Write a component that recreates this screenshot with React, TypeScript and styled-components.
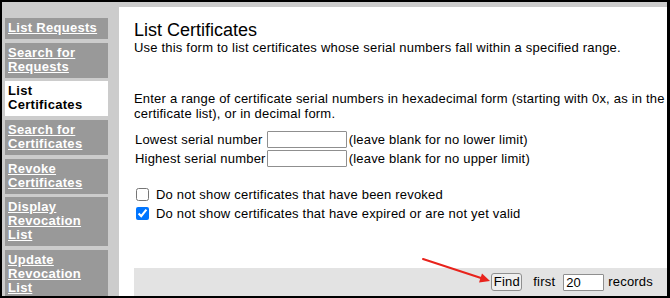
import React from "react";
import styled, { createGlobalStyle } from "styled-components";

const GlobalStyle = createGlobalStyle`
  html, body { margin: 0; padding: 0; background: #fff; }
  body { font-family: "Liberation Sans", Arial, sans-serif; }
`;

const Frame = styled.div`
  position: relative;
  box-sizing: border-box;
  width: 670px;
  height: 298px;
  border-style: solid;
  border-color: #000;
  border-width: 2px 3px 2px 2px;
  background: #cccccc;
  display: flex;
  overflow: hidden;
`;

const Sidebar = styled.nav`
  box-sizing: border-box;
  width: 117px;
  flex: none;
  padding: 16px 11px 0 3px;
  display: flex;
  flex-direction: column;
  gap: 3.7px;
`;

const NavItem = styled.a<{ $active?: boolean }>`
  display: block;
  padding: 3px 3px 4px 3px;
  background: ${(p) => (p.$active ? "#ffffff" : "#999999")};
  color: ${(p) => (p.$active ? "#000000" : "#ffffff")};
  text-decoration: ${(p) => (p.$active ? "none" : "underline")};
  font-size: 13px;
  line-height: 14px;
  font-weight: bold;
  letter-spacing: 0.3px;
  cursor: pointer;
`;

const Main = styled.main`
  flex: 1;
  margin-top: 5px;
  background: #ffffff;
  padding: 14px 0 0 15px;
  display: flex;
  flex-direction: column;
  color: #000;
  font-size: 13px;
  line-height: 15px;
  letter-spacing: 0.2px;
  min-width: 0;
`;

const Title = styled.h1`
  margin: 0;
  font-size: 18px;
  line-height: 19px;
  font-weight: normal;
  letter-spacing: 0;
`;

const Para = styled.p<{ $gap?: number }>`
  margin: ${(p) => p.$gap ?? 0}px 0 0 0;
  white-space: nowrap;
`;

const SerialGrid = styled.div`
  display: grid;
  grid-template-columns: max-content max-content 1fr;
  grid-auto-rows: 19px;
  align-items: center;
  margin-top: 9px;
`;

const Label = styled.span`
  padding: 0 1px 0 1px;
`;

const Note = styled.span`
  padding-left: 2px;
`;

const TextInput = styled.input<{ $w: number }>`
  box-sizing: border-box;
  width: ${(p) => p.$w}px;
  height: 17px;
  margin: 0;
  padding: 0 2px;
  border: 1px solid #8f8f8f;
  border-radius: 1px;
  font-family: "Liberation Sans", Arial, sans-serif;
  font-size: 13px;
  color: #000;
  background: #fff;
  outline: none;
`;

const Checks = styled.div`
  margin-top: 17px;
  display: flex;
  flex-direction: column;
`;

const CheckRow = styled.label`
  display: flex;
  align-items: center;
  height: 19px;
  input {
    margin: 0 7px 0 2px;
    width: 13px;
    height: 13px;
  }
`;

const Bar = styled.div`
  margin-top: 45px;
  height: 40px;
  background: #e3e3e3;
  display: flex;
  justify-content: flex-end;
  align-items: flex-start;
  padding: 5px 14px 0 0;
  box-sizing: border-box;
`;

const BarItem = styled.span<{ $ml?: number }>`
  margin-left: ${(p) => p.$ml ?? 0}px;
  line-height: 18px;
`;

const FindButton = styled.button`
  box-sizing: border-box;
  height: 18px;
  width: 31px;
  padding: 0;
  margin: 0;
  border: 1px solid #8f8f8f;
  border-radius: 3px;
  background: #efefef;
  font-family: "Liberation Sans", Arial, sans-serif;
  font-size: 13px;
  line-height: 16px;
  letter-spacing: 0.2px;
  color: #000;
`;

const InputWrap = styled.span<{ $ml?: number }>`
  margin-left: ${(p) => p.$ml ?? 0}px;
  display: flex;
  align-items: center;
  height: 18px;
`;

const Arrow = styled.svg`
  position: absolute;
  left: 416px;
  top: 250px;
  width: 80px;
  height: 40px;
  overflow: visible;
  pointer-events: none;
`;

const navItems: { label: string; active?: boolean }[] = [
  { label: "List Requests" },
  { label: "Search for Requests" },
  { label: "List Certificates", active: true },
  { label: "Search for Certificates" },
  { label: "Revoke Certificates" },
  { label: "Display Revocation List" },
  { label: "Update Revocation List" },
];

export default function App() {
  return (
    <>
      <GlobalStyle />
      <Frame>
        <Sidebar>
          {navItems.map((n) => (
            <NavItem key={n.label} $active={n.active}>
              {n.label}
            </NavItem>
          ))}
        </Sidebar>
        <Main>
          <Title>List Certificates</Title>
          <Para>Use this form to list certificates whose serial numbers fall within a specified range.</Para>
          <Para $gap={36}>
            Enter a range of certificate serial numbers in hexadecimal form (starting with 0x, as in the
            <br />
            certificate list), or in decimal form.
          </Para>
          <SerialGrid>
            <Label>Lowest serial number</Label>
            <TextInput $w={80} />
            <Note>(leave blank for no lower limit)</Note>
            <Label>Highest serial number</Label>
            <TextInput $w={80} />
            <Note>(leave blank for no upper limit)</Note>
          </SerialGrid>
          <Checks>
            <CheckRow>
              <input type="checkbox" />
              Do not show certificates that have been revoked
            </CheckRow>
            <CheckRow>
              <input type="checkbox" defaultChecked />
              Do not show certificates that have expired or are not yet valid
            </CheckRow>
          </Checks>
          <Bar>
            <FindButton>Find</FindButton>
            <BarItem $ml={11}>first</BarItem>
            <InputWrap $ml={8}>
              <TextInput $w={41} defaultValue="20" />
            </InputWrap>
            <BarItem $ml={4}>records</BarItem>
          </Bar>
        </Main>
        <Arrow viewBox="0 0 80 40">
          <line x1="5" y1="7" x2="63" y2="26" stroke="#e8231c" strokeWidth="2" strokeLinecap="round" />
          <polygon points="72,29 61,30.5 64,21.5" fill="#e8231c" />
        </Arrow>
      </Frame>
    </>
  );
}
